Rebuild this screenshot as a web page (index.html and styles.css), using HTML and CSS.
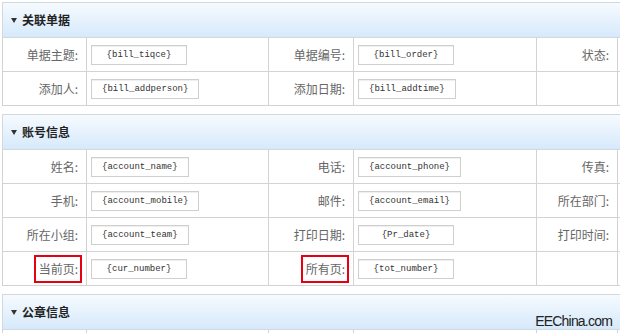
FILE: index.html
```html
<!DOCTYPE html>
<html lang="zh-CN">
<head>
  <meta charset="UTF-8">
  <title>打印模板</title>
  <link rel="stylesheet" href="styles.css">
</head>
<body>
  <div class="page">
    <div class="panel">
      <div class="panel-head"><span class="caret"></span>关联单据</div>
      <div class="grid">
        <div class="cell label">单据主题:</div>
        <div class="cell field"><span class="box">{bill_tiqce}</span></div>
        <div class="cell label">单据编号:</div>
        <div class="cell field"><span class="box">{bill_order}</span></div>
        <div class="cell label">状态:</div>
        <div class="cell field"></div>

        <div class="cell label">添加人:</div>
        <div class="cell field"><span class="box">{bill_addperson}</span></div>
        <div class="cell label">添加日期:</div>
        <div class="cell field"><span class="box">{bill_addtime}</span></div>
        <div class="cell label"></div>
        <div class="cell field"></div>
      </div>
    </div>

    <div class="panel">
      <div class="panel-head"><span class="caret"></span>账号信息</div>
      <div class="grid">
        <div class="cell label">姓名:</div>
        <div class="cell field"><span class="box">{account_name}</span></div>
        <div class="cell label">电话:</div>
        <div class="cell field"><span class="box">{account_phone}</span></div>
        <div class="cell label">传真:</div>
        <div class="cell field"></div>

        <div class="cell label">手机:</div>
        <div class="cell field"><span class="box">{account_mobile}</span></div>
        <div class="cell label">邮件:</div>
        <div class="cell field"><span class="box">{account_email}</span></div>
        <div class="cell label">所在部门:</div>
        <div class="cell field"></div>

        <div class="cell label">所在小组:</div>
        <div class="cell field"><span class="box">{account_team}</span></div>
        <div class="cell label">打印日期:</div>
        <div class="cell field"><span class="box">{Pr_date}</span></div>
        <div class="cell label">打印时间:</div>
        <div class="cell field"></div>

        <div class="cell label"><span class="mark">当前页:</span></div>
        <div class="cell field"><span class="box">{cur_number}</span></div>
        <div class="cell label"><span class="mark">所有页:</span></div>
        <div class="cell field"><span class="box">{tot_number}</span></div>
        <div class="cell label"></div>
        <div class="cell field"></div>
      </div>
    </div>

    <div class="panel cut">
      <div class="panel-head"><span class="caret"></span>公章信息</div>
      <div class="grid">
        <div class="cell label"></div>
        <div class="cell field"></div>
        <div class="cell label"></div>
        <div class="cell field"></div>
        <div class="cell label"></div>
        <div class="cell field"></div>
      </div>
    </div>

    <div class="watermark">EEChina.com</div>
  </div>
</body>
</html>
```

FILE: styles.css
```css
html, body {
  margin: 0;
  padding: 0;
  background: #fff;
  overflow: hidden;
}
body {
  font-family: "Noto Sans CJK SC", "Liberation Sans", sans-serif;
  font-size: 12px;
  color: #666;
}
.page {
  position: relative;
  width: 620px;
  height: 334px;
  padding: 2px 0 0 2px;
  box-sizing: border-box;
  overflow: hidden;
}
.panel {
  width: 618px;
  margin-bottom: 8px;
}
.panel-head {
  display: flex;
  align-items: center;
  height: 34px;
  padding-left: 8px;
  border: 1px solid #d0d8e0;
  border-right: none;
  background: linear-gradient(#f6fafe, #d6e9fb);
  font-weight: bold;
  color: #222;
  line-height: 14px;
}
.caret {
  width: 0;
  height: 0;
  margin-right: 5px;
  border-left: 3px solid transparent;
  border-right: 3px solid transparent;
  border-top: 5px solid #333;
}
.grid {
  display: grid;
  grid-template-columns: 84px 182px 85px 183px 81px 1fr;
  grid-auto-rows: 34px;
  border-left: 1px solid #d3d3d3;
}
.cut {
  margin-bottom: 0;
}
.cut .grid {
  height: 3px;
  overflow: hidden;
}
.cell {
  display: flex;
  align-items: center;
  min-width: 0;
  border-right: 1px solid #d3d3d3;
  border-bottom: 1px solid #d3d3d3;
  line-height: 14px;
}
.label {
  justify-content: flex-end;
  padding-right: 8px;
}
.field {
  padding-left: 4px;
}
.box {
  min-width: 96px;
  height: 20px;
  box-sizing: border-box;
  padding: 0 10px;
  border: 1px solid #cfcfcf;
  box-shadow: inset 0 1px 1px #eee;
  background: #fff;
  font-family: "Liberation Mono", monospace;
  font-size: 9px;
  line-height: 18px;
  color: #333;
  text-align: center;
}
.mark {
  padding: 5px 2px 5px 3px;
  margin-right: -4px;
  border: 2px solid #e60012;
}
.watermark {
  position: absolute;
  right: 8px;
  bottom: 5px;
  font-family: "Liberation Sans", sans-serif;
  font-size: 14px;
  letter-spacing: -0.8px;
  color: #222;
}
```
